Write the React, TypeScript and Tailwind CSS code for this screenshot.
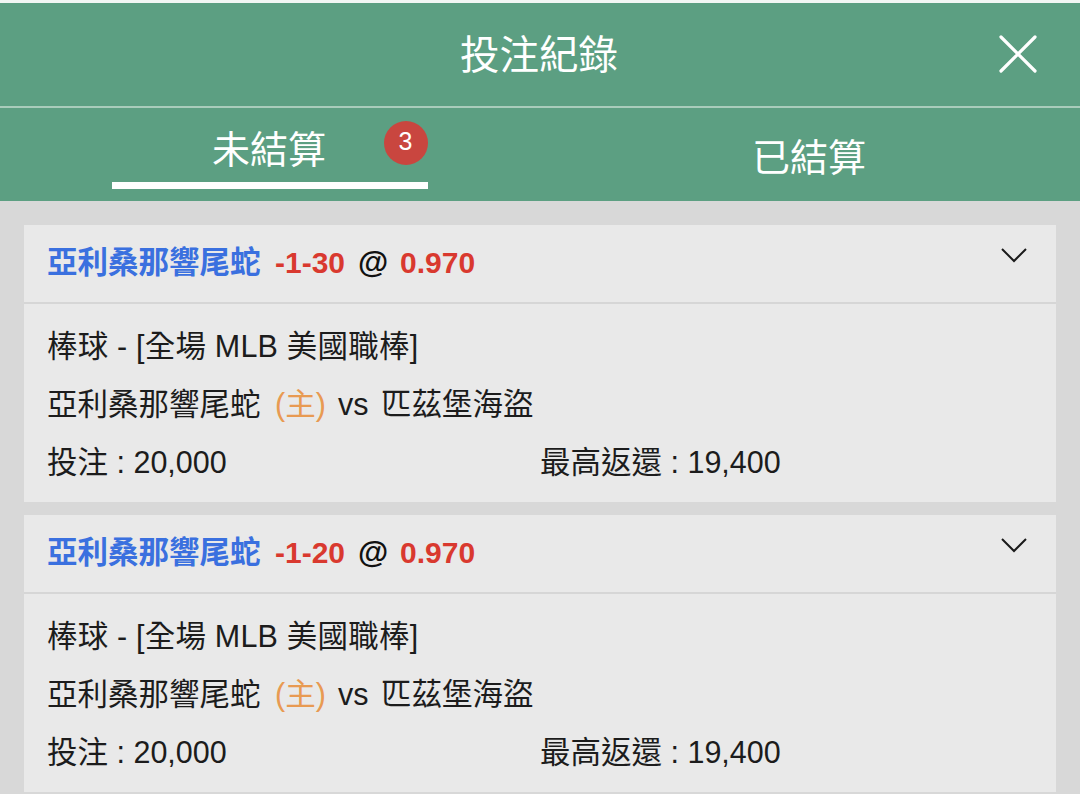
const font = { fontFamily: '"Liberation Sans", "Noto Sans CJK TC", sans-serif' };

function Chevron() {
  return (
    <svg width="28" height="16" viewBox="0 0 28 16" fill="none" stroke="#1a1a1a" strokeWidth="2" className="block">
      <path d="M2 2 L14 14 L26 2" />
    </svg>
  );
}

function Card({ handicap, last }: { handicap: string; last?: boolean }) {
  return (
    <div className={`bg-[#e9e9e9] ${last ? "" : "mb-[13px]"}`}>
      <div className="h-[77px] pl-[23px] pr-[28px] flex items-center justify-between">
        <div className="flex items-center text-[30px] font-bold leading-none pb-[2px]">
          <span className="text-[#3a70df] text-[30.5px] w-[228px] font-bold">亞利桑那響尾蛇</span>
          <span className="text-[#d9392f] w-[83px]">{handicap}</span>
          <span className="text-[#111111] text-[31px] w-[42px]">@</span>
          <span className="text-[#d9392f]">0.970</span>
        </div>
        <div className="-mt-[18px]">
          <Chevron />
        </div>
      </div>
      <div className="h-[2px] bg-[#d6d6d6]" />
      <div className="pl-[23px] pt-[13px] pb-[11px] text-[30.5px] leading-[58px] text-[#1c1c1c]">
        <div className="tracking-[0.2px]">棒球 - [全場 MLB 美國職棒]</div>
        <div className="flex items-center">
          <span className="w-[228px]">亞利桑那響尾蛇</span>
          <span className="text-[#e89a52] w-[63px]">(主)</span>
          <span className="w-[43px]">vs</span>
          <span>匹茲堡海盜</span>
        </div>
        <div className="flex">
          <span className="w-[493px]">投注 : 20,000</span>
          <span>最高返還&nbsp;: 19,400</span>
        </div>
      </div>
    </div>
  );
}

export default function App() {
  return (
    <div style={font} className="w-[1080px] h-[794px] overflow-hidden bg-[#d8d8d8] flex flex-col">
      <div className="h-[3px] bg-[#f2f6f4]" />
      <div className="h-[103px] bg-[#5c9f82] relative flex items-center justify-center">
        <span className="text-white text-[39.5px] font-normal pt-[3px] -ml-[2px]">投注紀錄</span>
        <svg width="40" height="40" viewBox="0 0 40 40" className="absolute right-[42px] top-[31px]" stroke="#ffffff" strokeWidth="3.2" strokeLinecap="round">
          <path d="M3 3 L37 37 M37 3 L3 37" />
        </svg>
      </div>
      <div className="h-[2px] bg-[#a9ccbb]" />
      <div className="h-[93px] bg-[#5c9f82] flex">
        <div className="w-[540px] relative flex justify-center">
          <span className="text-white text-[38px] mt-[17px] leading-[50px] -ml-[2px]">未結算</span>
          <div className="absolute left-[384px] top-[13px] w-[44px] h-[44px] rounded-full bg-[#c9463f] flex items-center justify-center text-white text-[25px] pb-[3px] pr-[1px]">3</div>
          <div className="absolute left-[112px] top-[74px] w-[316px] h-[7px] bg-white" />
        </div>
        <div className="w-[540px] flex justify-center">
          <span className="text-white text-[38px] mt-[25px] leading-[50px] -ml-[2px]">已結算</span>
        </div>
      </div>
      <div className="px-[24px] pt-[24px]">
        <Card handicap="-1-30" />
        <Card handicap="-1-20" last />
      </div>
    </div>
  );
}
